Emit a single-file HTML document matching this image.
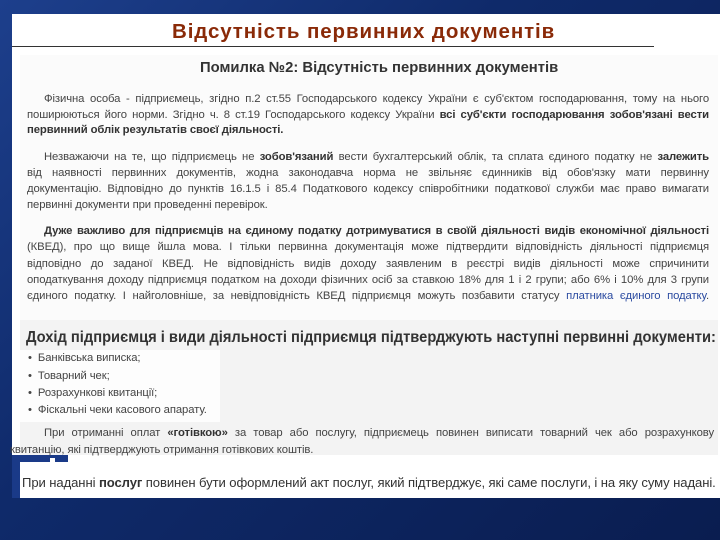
<!DOCTYPE html>
<html><head><meta charset="utf-8"><style>
body{margin:0;width:720px;height:540px;overflow:hidden;background:linear-gradient(135deg,#1d3f8c 0%,#0f2a6a 40%,#0a1d50 100%);font-family:"Liberation Sans",sans-serif;position:relative}
.a{position:absolute}
.l{position:absolute;font-size:11.3px;color:#444;white-space:nowrap;letter-spacing:-0.1px}
.j{text-align:justify;text-align-last:justify;white-space:normal}
b{color:#333}
</style></head><body>
<div class="a" style="left:12px;top:14px;width:708px;height:484px;background:#fff"></div>
<div class="a" style="left:12px;top:320px;width:8px;height:140px;background:#fff"></div>
<div class="a" style="left:12px;top:455px;width:56px;height:43px;background:#1a3a88"></div>
<div class="a" style="left:20px;top:462px;width:700px;height:36px;background:#fff"></div>
<div class="a" style="left:50px;top:458px;width:5px;height:40px;background:#fff"></div>
<div class="a" style="left:172px;top:20px;font-size:20.5px;font-weight:bold;color:#8a2a08;letter-spacing:0.9px">Відсутність первинних документів</div>
<div class="a" style="left:12px;top:46px;width:642px;height:1px;background:#333"></div>
<div class="a" style="left:20px;top:55px;width:698px;height:265px;background:#fbfbfb"></div>
<div class="a" style="left:20px;top:320px;width:698px;height:135px;background:#f3f3f3"></div>
<div class="a" style="left:20px;top:350px;width:200px;height:72px;background:#fdfdfd"></div>
<div class="a" style="left:200px;top:60px;font-size:14.8px;font-weight:bold;color:#333">Помилка №2: Відсутність первинних документів</div>
<div class="l j" style="left:44px;top:93px;width:665px">Фізична особа - підприємець, згідно п.2 ст.55 Господарського кодексу України є суб'єктом господарювання, тому на нього</div>
<div class="l j" style="left:27px;top:109px;width:682px">поширюються його норми. Згідно ч. 8 ст.19 Господарського кодексу України <b>всі суб'єкти господарювання зобов'язані вести</b></div>
<div class="l" style="left:27px;top:124px"><b>первинний облік результатів своєї діяльності.</b></div>
<div class="l j" style="left:44px;top:151px;width:665px">Незважаючи на те, що підприємець не <b>зобов'язаний</b> вести бухгалтерський облік, та сплата єдиного податку не <b>залежить</b></div>
<div class="l j" style="left:27px;top:167px;width:682px">від наявності первинних документів, жодна законодавча норма не звільняє єдинників від обов'язку мати первинну</div>
<div class="l j" style="left:27px;top:183px;width:682px">документацію. Відповідно до пунктів 16.1.5 і 85.4 Податкового кодексу співробітники податкової служби має право вимагати</div>
<div class="l" style="left:27px;top:199px">первинні документи при проведенні перевірок.</div>
<div class="l j" style="left:44px;top:225px;width:665px"><b>Дуже важливо для підприємців на єдиному податку дотримуватися в своїй діяльності видів економічної діяльності</b></div>
<div class="l j" style="left:27px;top:241px;width:682px">(КВЕД), про що вище йшла мова. І тільки первинна документація може підтвердити відповідність діяльності підприємця</div>
<div class="l j" style="left:27px;top:258px;width:682px">відповідно до заданої КВЕД. Не відповідність видів доходу заявленим в реєстрі видів діяльності може спричинити</div>
<div class="l j" style="left:27px;top:274px;width:682px">оподаткування доходу підприємця податком на доходи фізичних осіб за ставкою 18% для 1 і 2 групи; або 6% і 10% для 3 групи</div>
<div class="l j" style="left:27px;top:290px;width:682px">єдиного податку. І найголовніше, за невідповідність КВЕД підприємця можуть позбавити статусу <span style="color:#2a4aa0">платника єдиного податку</span>.</div>
<div class="a" style="left:26px;top:329px;font-size:15.5px;font-weight:bold;color:#333;white-space:nowrap;transform:scaleX(0.948);transform-origin:0 0">Дохід підприємця і види діяльності підприємця підтверджують наступні первинні документи:</div>
<div class="l" style="left:28px;top:352px">•&nbsp; Банківська виписка;</div>
<div class="l" style="left:28px;top:370px">•&nbsp; Товарний чек;</div>
<div class="l" style="left:28px;top:387px">•&nbsp; Розрахункові квитанції;</div>
<div class="l" style="left:28px;top:404px">•&nbsp; Фіскальні чеки касового апарату.</div>
<div class="l j" style="left:44px;top:427px;width:670px">При отриманні оплат <b>«готівкою»</b> за товар або послугу, підприємець повинен виписати товарний чек або розрахункову</div>
<div class="l" style="left:10px;top:444px">квитанцію, які підтверджують отримання готівкових коштів.</div>
<div class="l" style="left:22px;top:475px;font-size:13.3px;color:#333;transform:scaleX(0.985);transform-origin:0 0">При наданні <b>послуг</b> повинен бути оформлений акт послуг, який підтверджує, які саме послуги, і на яку суму надані.</div>
</body></html>
